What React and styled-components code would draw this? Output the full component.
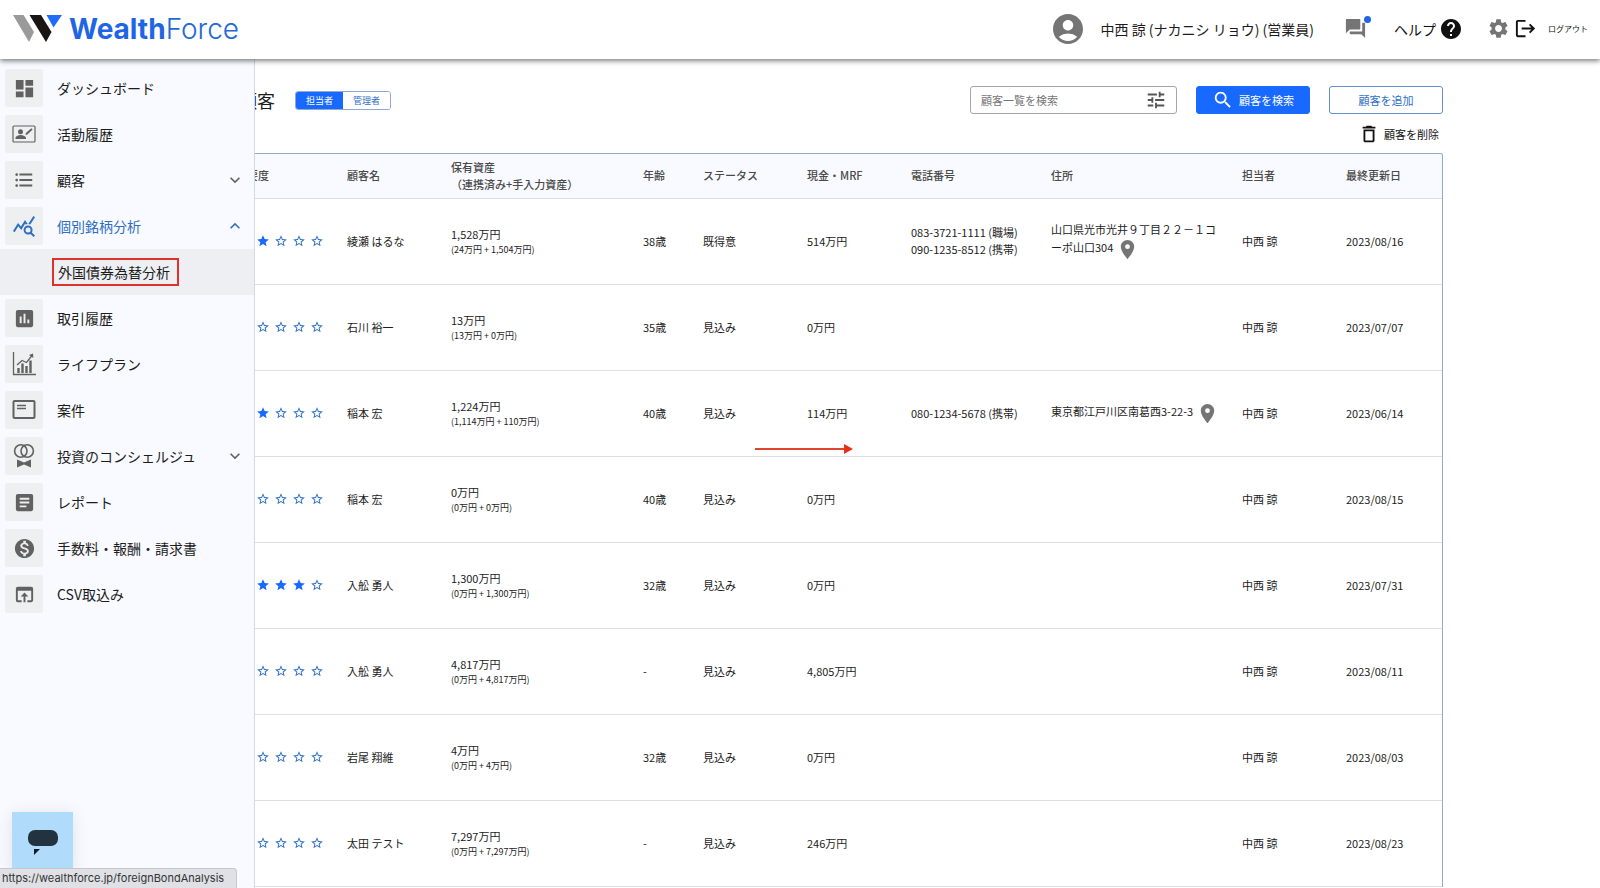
import React from "react";
import styled, { createGlobalStyle } from "styled-components";
import {
  MdAccountCircle, MdArticle, MdDashboard, MdDeleteOutline, MdExpandLess, MdExpandMore, MdFormatListBulleted,
  MdHelp, MdInsertChart, MdLocationOn, MdLogout, MdMonetizationOn, MdOpenInBrowser, MdQueryStats, MdQuestionAnswer,
  MdSearch, MdSettings, MdStar, MdStarBorder, MdTune,
} from "react-icons/md";

const blue = "#1769ff";
const linkBlue = "#2f6fc4";
const lineBlue = "#8fa9cf";

const GlobalStyle = createGlobalStyle`
  *, *::before, *::after { box-sizing: border-box; }
  body {
    margin: 0;
    background: #fff;
    color: #1c1c1c;
    font: 400 11px/16px "Noto Sans CJK JP", sans-serif;
  }
  #root { height: 100vh; overflow: hidden; }
  button, input { font: inherit; }
  a { color: inherit; text-decoration: none; }
  svg { flex: none; display: block; }
`;

const Page = styled.div`
  position: relative;
  height: 100%;
  display: flex;
  flex-direction: column;
`;

const Header = styled.header`
  position: relative;
  z-index: 3;
  flex: none;
  height: 59px;
  padding: 0 12px 2px;
  display: flex;
  align-items: center;
  justify-content: space-between;
  background: #fff;
  box-shadow: 0 2px 5px rgba(0, 0, 0, 0.5);
`;

const Brand = styled.a`
  display: flex;
  align-items: center;
  gap: 6px;
  color: #2468d8;
  font: 300 28px/32px Inter, sans-serif;
  b { font-weight: 700; color: #1f66e5; }
`;

const HeaderTools = styled.div`
  display: flex;
  align-items: center;
  font-size: 14px;
  line-height: 20px;
`;

const User = styled.div`
  display: flex;
  align-items: center;
  gap: 15px;
  margin-right: 30px;
  svg { color: #757575; }
`;

const ToolButton = styled.button`
  position: relative;
  display: flex;
  align-items: center;
  gap: ${(p) => p.$gap || 0}px;
  margin: 0 ${(p) => p.$after || 0}px 0 0;
  padding: 0;
  border: 0;
  background: none;
  color: ${(p) => p.$color || "#111"};
  cursor: pointer;
`;

const Dot = styled.span`
  position: absolute;
  top: -1px;
  right: -4px;
  width: 7px;
  height: 7px;
  border-radius: 50%;
  background: #1f66e5;
`;

const SmallLabel = styled.span`
  font-size: 8px;
  line-height: 12px;
`;

const Sidebar = styled.nav`
  position: absolute;
  z-index: 2;
  top: 59px;
  bottom: 0;
  left: 0;
  width: 255px;
  padding-top: 6px;
  background: #f8faff;
  border-right: 1px solid #d3d8e2;
`;

const Menu = styled.ul`
  margin: 0;
  padding: 0;
  list-style: none;
`;

const MenuLink = styled.a`
  display: flex;
  align-items: center;
  gap: 14px;
  height: 46px;
  padding: 0 9px 0 5px;
  font-size: 14px;
  line-height: 20px;
  color: ${(p) => (p.$active ? linkBlue : "#1c1c1c")};
  > span:nth-child(2) { flex: 1; }
`;

const Tile = styled.span`
  display: grid;
  place-items: center;
  width: 38px;
  height: 38px;
  border-radius: 2px;
  background: #eeeff1;
  color: ${(p) => (p.$active ? linkBlue : "#616161")};
`;

const SubLink = styled.a`
  display: flex;
  align-items: center;
  height: 46px;
  padding-left: 52px;
  background: #eeeff3;
  font-size: 14px;
  line-height: 20px;
`;

const Marked = styled.span`
  padding: 2px 7px 2px 4px;
  border: 2px solid #e0302a;
`;

const Chat = styled.button`
  position: absolute;
  z-index: 4;
  left: 12px;
  bottom: 15px;
  display: grid;
  place-items: center;
  width: 61px;
  height: 61px;
  padding: 0;
  border: 0;
  background: #b1dbfa;
  box-shadow: 0 2px 16px rgba(0, 0, 0, 0.1);
`;

const StatusBar = styled.div`
  position: absolute;
  z-index: 5;
  left: 0;
  bottom: 0;
  height: 20px;
  padding: 0 12px 0 2px;
  border: 1px solid #c6c8cc;
  border-left: 0;
  border-bottom: 0;
  border-radius: 0 4px 0 0;
  background: #dfe1e6;
  color: #333;
  font: 400 11px/19px Inter, sans-serif;
`;

const Main = styled.main`
  flex: 1;
  min-height: 0;
  overflow: hidden;
  padding: 27px 157px 0;
`;

const TitleBar = styled.div`
  display: flex;
  align-items: center;
  height: 28px;
  padding-left: 82px;
`;

const Title = styled.h1`
  margin: 0 20px 0 0;
  font-size: 18px;
  line-height: 28px;
  font-weight: 400;
`;

const Toggle = styled.div`
  display: flex;
  height: 19px;
  margin-right: auto;
  border: 1px solid ${lineBlue};
  border-radius: 3px;
  overflow: hidden;
`;

const ToggleButton = styled.button`
  width: 47px;
  padding: 0;
  border: 0;
  background: ${(p) => (p.$on ? blue : "#fff")};
  color: ${(p) => (p.$on ? "#fff" : linkBlue)};
  font-size: 9px;
  line-height: 17px;
`;

const SearchBox = styled.label`
  display: flex;
  align-items: center;
  width: 207px;
  height: 28px;
  padding: 0 9px 0 10px;
  border: 1px solid #a3a6ab;
  border-radius: 3px;
  color: #555;
`;

const SearchInput = styled.input`
  flex: 1;
  min-width: 0;
  padding: 0;
  border: 0;
  outline: 0;
  background: none;
  &::placeholder { color: #757575; opacity: 1; }
`;

const ActionButton = styled.button`
  display: flex;
  align-items: center;
  justify-content: center;
  gap: 5px;
  width: 114px;
  height: 28px;
  margin-left: 19px;
  padding: 0;
  border: 1px solid ${(p) => (p.$solid ? blue : "#5f8fd0")};
  border-radius: 3px;
  background: ${(p) => (p.$solid ? blue : "#fff")};
  color: ${(p) => (p.$solid ? "#fff" : linkBlue)};
`;

const DeleteRow = styled.div`
  display: flex;
  justify-content: flex-end;
  align-items: center;
  height: 39px;
  padding: 0 4px 0 0;
`;

const TableFrame = styled.div`
  border: 1px solid ${lineBlue};
  border-bottom: 0;
  border-radius: 3px 3px 0 0;
  overflow: hidden;
`;

const Table = styled.table`
  width: 100%;
  table-layout: fixed;
  border-collapse: collapse;
`;

const HeadCell = styled.th`
  width: ${(p) => (p.$w ? p.$w + "px" : "auto")};
  height: 44px;
  padding: 0 0 0 ${(p) => p.$pad || 0}px;
  background: #f8faff;
  border-bottom: 1px solid #d9dde4;
  color: #4a4a4a;
  font-weight: 500;
  line-height: 17px;
  text-align: left;
  white-space: pre-line;
`;

const Cell = styled.td`
  height: 86px;
  padding: 0 0 0 ${(p) => p.$pad || 0}px;
  border-bottom: 1px solid #dcdfe3;
  line-height: 17px;
  vertical-align: middle;
  white-space: pre-line;
`;

const Stars = styled.div`
  display: flex;
  gap: 4px;
`;

const Small = styled.div`
  font-size: 9px;
  line-height: 14px;
`;

const Pin = styled(MdLocationOn)`
  display: inline-block;
  vertical-align: middle;
  color: #757575;
`;

const Address = styled.div`
  padding-right: 18px;
`;

const Arrow = styled.svg`
  position: absolute;
  z-index: 2;
  left: 755px;
  top: 443px;
`;

const Logo = () => (
  <svg width="51" height="28" viewBox="0 0 51 28" aria-hidden="true">
    <path d="M1 0h10.500L22 17l-5 10z" fill="#9a9a9a" />
    <path d="M17.500 0H29l10.500 17-5.500 10z" fill="#1a1412" />
    <path d="M34.500 0H50l-8.500 12.500z" fill="#1f6cf5" />
  </svg>
);

const ActivityIcon = () => (
  <svg width="24" height="24" viewBox="0 0 24 24" fill="currentColor">
    <rect x="1" y="4" width="22" height="16" rx="1" fill="none" stroke="currentColor" strokeWidth="1.200" />
    <circle cx="8.500" cy="9.700" r="2.500" />
    <path d="M3.500 17v-1c0-2 3.300-3 5-3s5.500 1 5.500 3v1z" />
    <path d="M13.500 13l.6-2.200 5.300-4.600 1.200 1.200-5.200 5z" />
  </svg>
);

const LifePlanIcon = () => (
  <svg width="24" height="24" viewBox="0 0 24 24" fill="none" stroke="currentColor">
    <path d="M1.500 0v22.500H24" strokeWidth="1.300" />
    <path d="M6.500 21v-5M10.500 21V11.500M14.500 21v-7M18.500 21V8.500" strokeWidth="2.400" />
    <path d="M5 13l5-4.500 4.500 2L20 3.500" strokeWidth="1.300" />
    <path d="M17 3l4-1.500.3 4.500z" fill="currentColor" stroke="none" />
  </svg>
);

const CaseIcon = () => (
  <svg width="24" height="24" viewBox="0 0 24 24" fill="none" stroke="currentColor">
    <rect x="1.500" y="3" width="21" height="17" rx="1" strokeWidth="2" />
    <path d="M5 7.500h9M5 10.500h9" strokeWidth="1.600" />
  </svg>
);

const ConciergeIcon = () => (
  <svg width="24" height="24" viewBox="0 0 24 24" fill="none" stroke="currentColor">
    <circle cx="8.800" cy="7" r="6.200" strokeWidth="1.600" />
    <circle cx="15.200" cy="7" r="6.200" strokeWidth="1.600" />
    <path d="M5 15.500l7 3 7-3v8l-7-3-7 3z" fill="currentColor" stroke="none" />
  </svg>
);

const menu = [
  ["ダッシュボード", <MdDashboard size={23} />],
  ["活動履歴", <ActivityIcon />],
  ["顧客", <MdFormatListBulleted size={22} />, "down"],
  ["個別銘柄分析", <MdQueryStats size={24} />, "up"],
  ["取引履歴", <MdInsertChart size={23} />],
  ["ライフプラン", <LifePlanIcon />],
  ["案件", <CaseIcon />],
  ["投資のコンシェルジュ", <ConciergeIcon />, "down"],
  ["レポート", <MdArticle size={23} />],
  ["手数料・報酬・請求書", <MdMonetizationOn size={23} />],
  ["CSV取込み", <MdOpenInBrowser size={23} />],
];

const columns = [
  ["重要度", 189, 78],
  ["顧客名", 104],
  ["保有資産\n（連携済み+手入力資産）", 192],
  ["年齢", 60],
  ["ステータス", 104],
  ["現金・MRF", 104],
  ["電話番号", 140],
  ["住所", null],
  ["担当者", 104],
  ["最終更新日", 96],
];

const rows = [
  [2, "綾瀬 はるな", "1,528万円", "(24万円 + 1,504万円)", "38歳", "既得意", "514万円", "083-3721-1111 (職場)\n090-1235-8512 (携帯)", "山口県光市光井９丁目２２－１コーポ山口304", "2023/08/16"],
  [1, "石川 裕一", "13万円", "(13万円 + 0万円)", "35歳", "見込み", "0万円", "", "", "2023/07/07"],
  [2, "稲本 宏", "1,224万円", "(1,114万円 + 110万円)", "40歳", "見込み", "114万円", "080-1234-5678 (携帯)", "東京都江戸川区南葛西3-22-3", "2023/06/14"],
  [1, "稲本 宏", "0万円", "(0万円 + 0万円)", "40歳", "見込み", "0万円", "", "", "2023/08/15"],
  [4, "入舩 勇人", "1,300万円", "(0万円 + 1,300万円)", "32歳", "見込み", "0万円", "", "", "2023/07/31"],
  [1, "入舩 勇人", "4,817万円", "(0万円 + 4,817万円)", "-", "見込み", "4,805万円", "", "", "2023/08/11"],
  [1, "岩尾 翔維", "4万円", "(0万円 + 4万円)", "32歳", "見込み", "0万円", "", "", "2023/08/03"],
  [1, "太田 テスト", "7,297万円", "(0万円 + 7,297万円)", "-", "見込み", "246万円", "", "", "2023/08/23"],
];

const Rating = ({ value }) => (
  <Stars>
    {[1, 2, 3, 4, 5].map((n) =>
      n <= value ? <MdStar key={n} size={14} color={blue} /> : <MdStarBorder key={n} size={14} color={linkBlue} />
    )}
  </Stars>
);

export default function App() {
  return (
    <Page lang="ja">
      <GlobalStyle />
      <Header>
        <Brand href="#">
          <Logo />
          <span><b>Wealth</b>Force</span>
        </Brand>
        <HeaderTools>
          <User>
            <MdAccountCircle size={36} />
            <span>中西 諒 (ナカニシ リョウ) (営業員)</span>
          </User>
          <ToolButton $color="#757575" $after={27} aria-label="メッセージ">
            <MdQuestionAnswer size={23} />
            <Dot />
          </ToolButton>
          <ToolButton $gap={3} $after={24}>
            ヘルプ
            <MdHelp size={24} />
          </ToolButton>
          <ToolButton $color="#757575" $after={4} aria-label="設定">
            <MdSettings size={23} />
          </ToolButton>
          <ToolButton $gap={11}>
            <MdLogout size={23} />
            <SmallLabel>ログアウト</SmallLabel>
          </ToolButton>
        </HeaderTools>
      </Header>

      <Sidebar>
        <Menu>
          {menu.map(([label, icon, chevron]) => (
            <li key={label}>
              <MenuLink href="#" $active={chevron === "up"}>
                <Tile $active={chevron === "up"}>{icon}</Tile>
                <span>{label}</span>
                {chevron === "down" && <MdExpandMore size={20} color="#616161" />}
                {chevron === "up" && <MdExpandLess size={20} />}
              </MenuLink>
              {chevron === "up" && (
                <SubLink href="#">
                  <Marked>外国債券為替分析</Marked>
                </SubLink>
              )}
            </li>
          ))}
        </Menu>
      </Sidebar>

      <Main>
        <TitleBar>
          <Title>顧客</Title>
          <Toggle>
            <ToggleButton $on>担当者</ToggleButton>
            <ToggleButton>管理者</ToggleButton>
          </Toggle>
          <SearchBox>
            <SearchInput placeholder="顧客一覧を検索" aria-label="顧客一覧を検索" />
            <MdTune size={22} />
          </SearchBox>
          <ActionButton $solid>
            <MdSearch size={22} />
            顧客を検索
          </ActionButton>
          <ActionButton>顧客を追加</ActionButton>
        </TitleBar>
        <DeleteRow>
          <ToolButton $gap={4}>
            <MdDeleteOutline size={22} />
            顧客を削除
          </ToolButton>
        </DeleteRow>
        <TableFrame>
          <Table>
            <thead>
              <tr>
                {columns.map(([label, w, pad]) => (
                  <HeadCell key={label} $w={w} $pad={pad}>{label}</HeadCell>
                ))}
              </tr>
            </thead>
            <tbody>
              {rows.map(([stars, name, total, parts, age, status, cash, phone, address, date]) => (
                <tr key={date}>
                  <Cell $pad={80}><Rating value={stars} /></Cell>
                  <Cell>{name}</Cell>
                  <Cell>
                    {total}
                    <Small>{parts}</Small>
                  </Cell>
                  <Cell>{age}</Cell>
                  <Cell>{status}</Cell>
                  <Cell>{cash}</Cell>
                  <Cell>{phone}</Cell>
                  <Cell>{address && <Address>{address} <Pin size={23} /></Address>}</Cell>
                  <Cell>中西 諒</Cell>
                  <Cell>{date}</Cell>
                </tr>
              ))}
            </tbody>
          </Table>
        </TableFrame>
      </Main>

      <Arrow width="98" height="12" viewBox="0 0 98 12" aria-hidden="true">
        <path d="M0 6h90" stroke="#e0452f" strokeWidth="2" />
        <path d="M89 1l9 5-9 5z" fill="#e8301c" />
      </Arrow>

      <Chat aria-label="チャット">
        <svg width="32" height="26" viewBox="0 0 32 26">
          <rect x="1" y="0" width="30" height="16" rx="7" fill="#22333f" />
          <path d="M7 19h6l-6 6z" fill="#111c26" />
        </svg>
      </Chat>
      <StatusBar>https://wealthforce.jp/foreignBondAnalysis</StatusBar>
    </Page>
  );
}
